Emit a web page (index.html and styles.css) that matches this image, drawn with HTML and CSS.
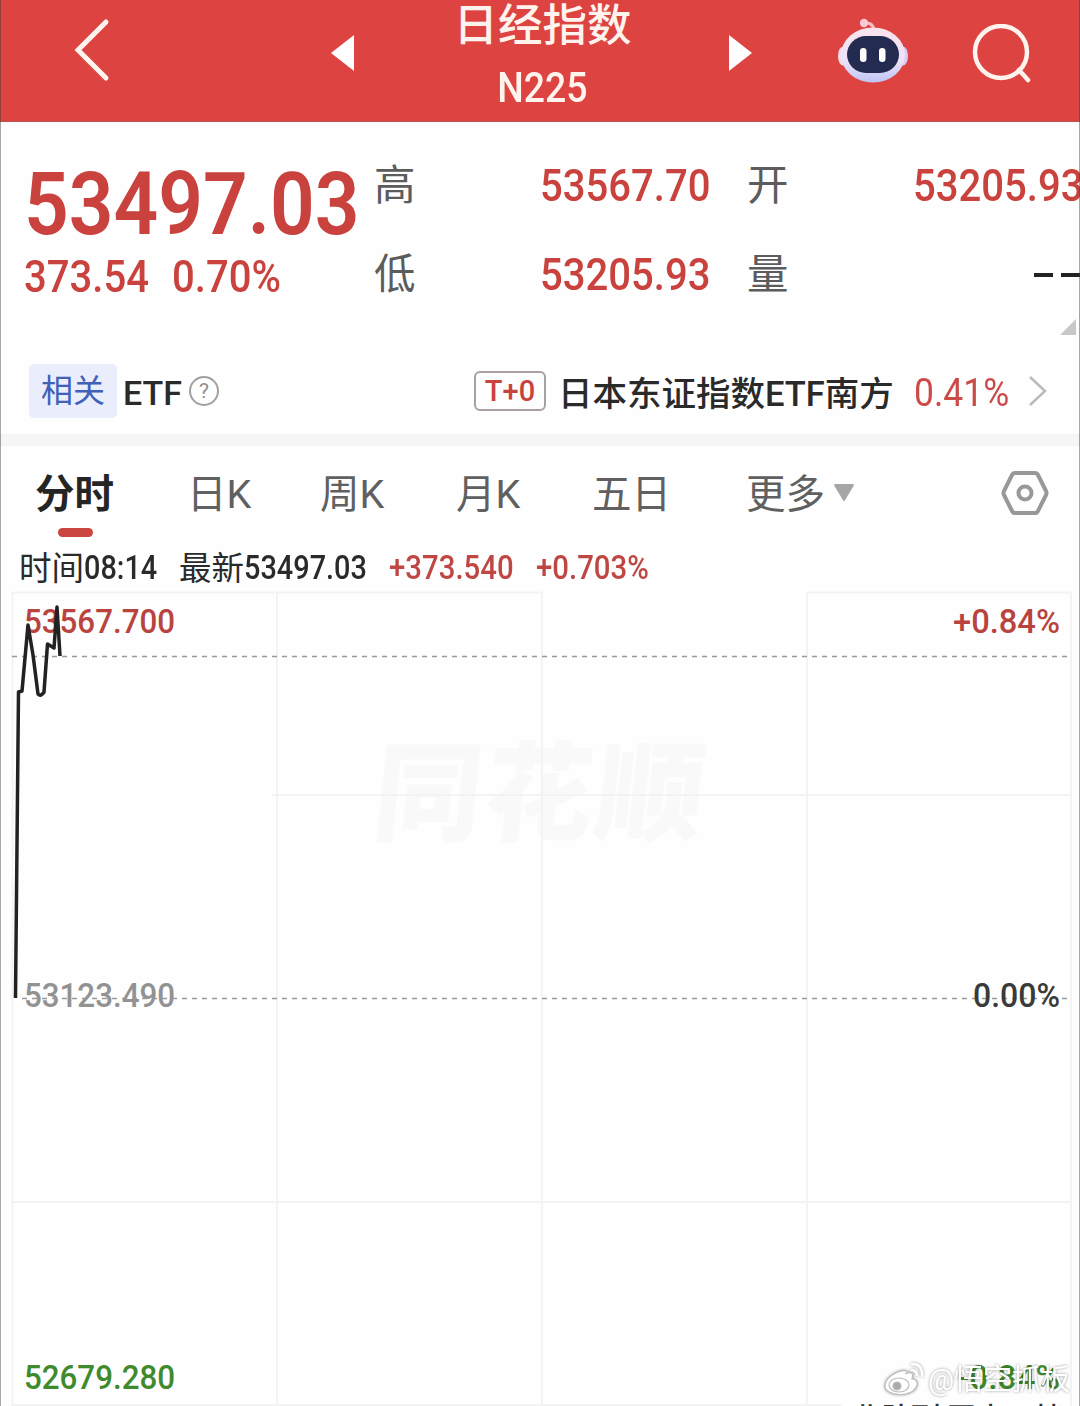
FILE: index.html
```html
<!DOCTYPE html>
<html lang="zh-CN">
<head>
  <meta charset="UTF-8" />
  <meta name="viewport" content="width=device-width, initial-scale=1" />
  <title>日经指数 N225</title>
  <link rel="stylesheet" href="styles.css">
</head>
<body>

<header>
  <svg class="back" width="40" height="66" viewBox="0 0 40 66"><path d="M35 5 L7 33 L35 61" fill="none" stroke="#fff3ee" stroke-width="5" stroke-linecap="round"/></svg>
  <svg class="prev" width="24" height="36" viewBox="0 0 24 36"><path d="M0 18 L23 0 V36 Z" fill="#fff"/></svg>
  <div class="title">
    <h1>日经指数</h1>
    <div class="code"><span class="num">N225</span></div>
  </div>
  <svg class="next" width="24" height="36" viewBox="0 0 24 36"><path d="M23 18 L0 0 V36 Z" fill="#fff"/></svg>
  <svg class="robot" width="70" height="66" viewBox="0 0 70 66">
    <defs>
      <linearGradient id="shell" x1="0" y1="0" x2="0" y2="1">
        <stop offset="0" stop-color="#fbe3ec"/>
        <stop offset=".6" stop-color="#ece2fa"/>
        <stop offset="1" stop-color="#bfc4f5"/>
      </linearGradient>
    </defs>
    <path d="M26 5 Q35 4 36 12" fill="none" stroke="#f7bfc8" stroke-width="3"/>
    <circle cx="26" cy="5" r="4.200" fill="#fbc9d2"/>
    <ellipse cx="5" cy="38" rx="5" ry="9.500" fill="#f6dcea"/>
    <ellipse cx="65" cy="38" rx="5" ry="9.500" fill="#d9cdf5"/>
    <ellipse cx="35" cy="37" rx="32" ry="27.500" fill="url(#shell)"/>
    <rect x="9" y="18" width="52" height="37" rx="19" fill="#232b50"/>
    <rect x="22" y="30" width="6.500" height="14" rx="3.200" fill="#fff"/>
    <rect x="41" y="30" width="6.500" height="14" rx="3.200" fill="#fff"/>
  </svg>
  <svg class="search" width="60" height="60" viewBox="0 0 60 60" fill="none" stroke="#fff3ee" stroke-width="4.500" stroke-linecap="round"><circle cx="29" cy="28" r="26"/><path d="M47 46 L56 56"/></svg>
</header>

<section class="quote">
  <div class="price">
    <div class="last"><span class="num">53497.03</span></div>
    <div class="change"><span class="num">373.54</span><span class="num">0.70%</span></div>
  </div>
  <div class="stats">
    <span class="label">高</span><span class="num">53567.70</span>
    <span class="label">开</span><span class="num">53205.93</span>
    <span class="label">低</span><span class="num">53205.93</span>
    <span class="label">量</span><span class="dashes"><i></i><i></i></span>
  </div>
  <svg class="corner" width="18" height="18" viewBox="0 0 18 18"><path d="M17 1 V17 H1 Z" fill="#c8c8c8"/></svg>
</section>

<section class="etf">
  <span class="tag">相关</span>
  <span class="etf-label">ETF</span>
  <span class="help">?</span>
  <span class="t0">T+0</span>
  <span class="etf-name">日本东证指数<b>ETF</b>南方</span>
  <span class="etf-pct"><span class="num">0.41%</span></span>
  <svg class="more" width="20" height="34" viewBox="0 0 20 34"><path d="M2 3 L17 17 L2 31" fill="none" stroke="#bbb" stroke-width="2.500"/></svg>
</section>

<nav class="tabs">
  <span class="tab active">分时</span>
  <span class="tab">日K</span>
  <span class="tab">周K</span>
  <span class="tab">月K</span>
  <span class="tab">五日</span>
  <span class="tab">更多</span>
  <svg class="caret" width="22" height="20" viewBox="0 0 22 20"><path d="M2 2 H20 L11 17 Z" fill="#a6a6a6" stroke="#a6a6a6" stroke-width="2" stroke-linejoin="round"/></svg>
  <svg class="gear" width="48" height="46" viewBox="0 0 48 46" fill="none" stroke="#989898" stroke-width="4"><path d="M14 3 H34 Q36 3 37 5 L45 21 Q46 23 45 25 L37 41 Q36 43 34 43 H14 Q12 43 11 41 L3 25 Q2 23 3 21 L11 5 Q12 3 14 3 Z"/><circle cx="24" cy="23" r="6.500"/></svg>
</nav>

<div class="info">
  <span class="cn">时间</span><span class="num time">08:14</span>
  <span class="cn">最新</span><span class="num latest">53497.03</span>
  <span class="num diff">+373.540</span>
  <span class="num pct">+0.703%</span>
</div>

<svg class="chart" width="1080" height="816" viewBox="0 590 1080 816">
  <g class="logo">
    <text x="370" y="832" textLength="330" transform="skewX(-6) translate(88 0)">同花顺</text>
  </g>
  <g class="grid">
    <path d="M12 592.500 H542 M807 592.500 H1071 M12.500 592 V1406 M277 592 V1406 M542 592 V1406 M807 592 V1406 M1071 592 V1406"/>
    <path d="M272 795 H1071 M12 1202 H1071 M12 1405 H842"/>
  </g>
  <text class="up" x="24" y="633" textLength="151" lengthAdjust="spacingAndGlyphs">53567.700</text>
  <text class="up" x="953" y="633" textLength="107" lengthAdjust="spacingAndGlyphs">+0.84%</text>
  <text class="flat" x="24" y="1007" textLength="151" lengthAdjust="spacingAndGlyphs">53123.490</text>
  <path class="dash" d="M12 656.500 H1068"/>
  <path class="dash" d="M22 998.500 H1068"/>
  <text class="zero" x="973" y="1007" textLength="87" lengthAdjust="spacingAndGlyphs">0.00%</text>
  <text class="down" x="24" y="1389" textLength="151" lengthAdjust="spacingAndGlyphs">52679.280</text>
  <text class="down" x="958" y="1389" textLength="102" lengthAdjust="spacingAndGlyphs">-0.84%</text>
  <path class="line" d="M15.500 998 L18.500 692 L22 691 L28 625 L33 655 L38 694 Q41 697 44 692 L47.500 644 L54 648 L57 607 L60 656"/>
  <text class="cut" x="852" y="1429" textLength="212">北队列 买卖五档</text>
  <g class="weibo">
    <path d="M908 1373 C907 1366 885 1375 885 1386 C885 1397 914 1398 917 1385 C918 1381 915 1379 912 1379 C914 1373 911 1371 905 1374 Z"/>
    <ellipse cx="899" cy="1385" rx="10" ry="7"/>
    <circle class="pupil" cx="897" cy="1386" r="4"/>
    <path class="wave" d="M911 1364 Q923 1363 922 1377 M911 1370 Q917 1370 917 1376"/>
    <text x="928" y="1390" textLength="142">@悟空抓板</text>
  </g>
</svg>

</body>
</html>
```

FILE: styles.css
```css
* {
  box-sizing: border-box;
}
body {
  margin: 0;
  height: 1406px;
  overflow: hidden;
  position: relative;
  background: #fefefe;
  font-family: Roboto, "Noto Sans CJK SC", sans-serif;
  color: #2a2a2a;
}
/* thin frame on both sides of the screen */
body::before,
body::after {
  content: "";
  position: absolute;
  top: 0;
  bottom: 0;
  width: 1px;
  background: rgba(60,60,60,0.45);
  z-index: 2;
}
body::before { left: 0; }
body::after { right: 0; }
svg {
  display: block;
  flex: none;
}
.num {
  display: inline-block;
  transform: scaleX(0.91);
  transform-origin: left center;
  white-space: nowrap;
}
header {
  height: 122px;
  background: #dc4341;
  border-bottom: 1px solid #b9504d;
  color: #fff3ee;
  display: flex;
  align-items: flex-start;
}
.back { margin: 17px 0 0 71px; }
.prev { margin: 35px 0 0 220px; }
.title {
  width: 374px;
  text-align: center;
}
h1 {
  margin: 1px 0 0 1px;
  font-size: 44.500px;
  line-height: 50px;
  font-weight: 500;
}
.code {
  font-size: 42.500px;
  line-height: 50px;
  margin-top: 12px;
  font-weight: 500;
}
.code .num {
  transform: scaleX(0.88);
  transform-origin: center;
}
.next { margin-top: 35px; }
.robot { margin: 18px 0 0 85px; }
.search { margin: 24px 0 0 64px; }

.quote {
  height: 223px;
  display: flex;
  position: relative;
  color: #c9423d;
}
.price {
  width: 374px;
  padding-left: 24px;
}
.last {
  font-size: 87px;
  line-height: 100px;
  font-weight: 600;
  margin-top: 32px;
}
.last .num {
  transform: scaleX(0.9);
}
.change {
  font-size: 44px;
  line-height: 50px;
  font-weight: 500;
  display: flex;
  margin-top: -2px;
}
.change .num:first-child { width: 148px; }
.stats {
  display: grid;
  grid-template-columns: 166px 207px 166px 170px;
  grid-template-rows: 89px 89px;
  padding-top: 19px;
  font-size: 44px;
  font-weight: 500;
  align-items: center;
}
.label {
  font-size: 41.500px;
  font-weight: 400;
  color: #5c5c5c;
  padding-bottom: 7px;
}
.dashes {
  display: flex;
  gap: 8px;
  padding-left: 121px;
}
.dashes i {
  width: 19px;
  height: 4px;
  background: #222;
  flex: none;
}
.corner {
  position: absolute;
  right: 3px;
  bottom: 9px;
}

.etf {
  height: 101px;
  border-bottom: 12px solid #f6f6f7;
  display: flex;
  align-items: center;
  padding: 3px 0 0 29px;
}
.tag {
  width: 88px;
  height: 54px;
  line-height: 54px;
  border-radius: 5px;
  background: #e9edfc;
  color: #4160b8;
  font-size: 32px;
  text-align: center;
}
.etf-label {
  width: 66px;
  margin-left: 6px;
  padding-top: 3px;
  font-size: 34px;
  font-weight: 500;
}
.help {
  width: 30px;
  height: 30px;
  border: 2px solid #a0a0a0;
  border-radius: 50%;
  color: #909090;
  font-size: 21px;
  line-height: 27px;
  text-align: center;
}
.t0 {
  width: 72px;
  height: 40px;
  margin-left: 255px;
  border: 2px solid #a9a0a0;
  border-radius: 6px;
  color: #c9423d;
  font-size: 29px;
  line-height: 37px;
  font-weight: 500;
  text-align: center;
}
.etf-name {
  width: 356px;
  margin-left: 12px;
  font-size: 34.500px;
  font-weight: 500;
  white-space: nowrap;
}
.etf-name b {
  font-weight: inherit;
}
.etf-pct {
  width: 114px;
  padding-top: 4px;
  font-size: 39px;
  color: #cb4b49;
}

.tabs {
  height: 94px;
  display: flex;
  align-items: center;
  padding-left: 35px;
  font-size: 39.500px;
  color: #606060;
}
.tab {
  width: 136px;
  padding-bottom: 6px;
  white-space: nowrap;
}
.tab.active {
  width: 152px;
  color: #252525;
  font-weight: 700;
  position: relative;
}
.tab.active::after {
  content: "";
  position: absolute;
  left: 23px;
  bottom: -12px;
  width: 35px;
  height: 9px;
  border-radius: 5px;
  background: #cb4541;
}
.tab:nth-child(2) { width: 133px; }
.tab:nth-child(5) { width: 154px; }
.tab:nth-child(6) { width: 87px; }
.gear { margin-left: 146px; }

.info {
  height: 50px;
  display: flex;
  align-items: center;
  padding-left: 19px;
  font-size: 33px;
}
.info .num {
  transform: scaleX(0.875);
  font-weight: 500;
  padding-top: 4px;
}
.info .cn { font-size: 32.500px; }
.time { width: 95px; }
.latest { width: 145px; }
.info .diff,
.info .pct {
  color: #bf4743;
  transform: scaleX(0.89);
}
.diff { width: 147px; }

.chart text {
  font-family: Roboto, "Noto Sans CJK SC", sans-serif;
  font-size: 33.500px;
  font-weight: 500;
}
.grid {
  fill: none;
  stroke: #f3f3f3;
  stroke-width: 2;
}
.dash {
  stroke: #999;
  stroke-width: 1.500;
  stroke-dasharray: 5 5;
}
.line {
  fill: none;
  stroke: #222;
  stroke-width: 3.500;
  stroke-linejoin: round;
}
.up { fill: #b9443f; }
.flat { fill: #929292; }
.zero { fill: #3a3a3a; }
.down { fill: #3f8a2c; }
.chart .logo text {
  font-size: 108px;
  font-weight: 900;
  fill: #f9f9f9;
}
.chart .cut {
  font-size: 30px;
  fill: #333;
}
.weibo {
  fill: #fff;
  stroke: #bdbdbd;
  stroke-width: 1.200;
  filter: drop-shadow(0 0 1.500px rgba(0,0,0,0.4));
}
.weibo .pupil { fill: #aaa; }
.weibo .wave {
  fill: none;
  stroke: #fff;
  stroke-width: 2.500;
}
.chart .weibo text {
  font-size: 29px;
  font-weight: 400;
  stroke: none;
}
```
